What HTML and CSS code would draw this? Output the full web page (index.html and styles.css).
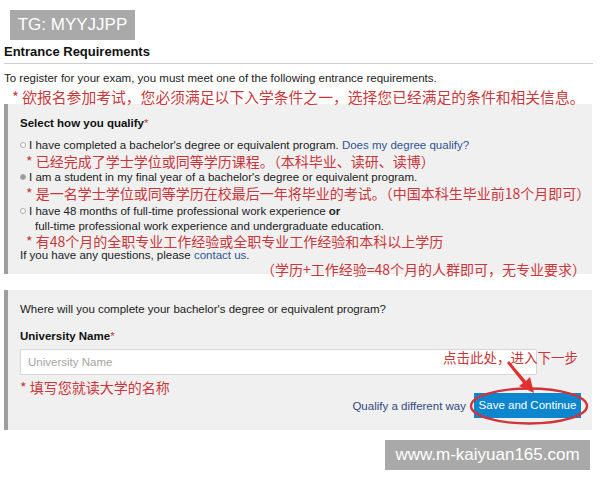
FILE: index.html
```html
<!DOCTYPE html>
<html>
<head>
<meta charset="utf-8">
<link rel="stylesheet" href="styles.css">
</head>
<body>
<div class="page">
  <div class="badge">TG: MYYJJPP</div>
  <h1 class="title">Entrance Requirements</h1>
  <p class="intro">To register for your exam, you must meet one of the following entrance requirements.</p>
  <p class="cn cn-intro">* 欲报名参加考试，您必须满足以下入学条件之一，选择您已经满足的条件和相关信息。</p>

  <div class="box box-qualify">
    <div class="row label">Select how you qualify<span class="star">*</span></div>
    <div class="row opt opt-first"><span class="radio"></span><span>I have completed a bachelor's degree or equivalent program. <a class="link">Does my degree qualify?</a></span></div>
    <div class="row cn cn-note">* 已经完成了学士学位或同等学历课程。（本科毕业、读研、读博）</div>
    <div class="row opt"><span class="radio radio-on"></span><span>I am a student in my final year of a bachelor's degree or equivalent program.</span></div>
    <div class="row cn cn-note">* 是一名学士学位或同等学历在校最后一年将毕业的考试。（中国本科生毕业前18个月即可）</div>
    <div class="row opt opt-third"><span class="radio"></span><span>I have 48 months of full-time professional work experience <b>or</b></span></div>
    <div class="row opt-cont">full-time professional work experience and undergraduate education.</div>
    <div class="row cn cn-note cn-tight">* 有48个月的全职专业工作经验或全职专业工作经验和本科以上学历</div>
    <div class="row questions">If you have any questions, please <a class="link">contact us</a>.</div>
    <div class="row cn cn-right">（学历+工作经验=48个月的人群即可，无专业要求）</div>
  </div>

  <div class="box box-uni">
    <div class="row where">Where will you complete your bachelor's degree or equivalent program?</div>
    <div class="row label uni-label">University Name<span class="star">*</span></div>
    <div class="input">University Name</div>
    <div class="row cn cn-uni">* 填写您就读大学的名称</div>
    <div class="actions">
      <a class="link qualify">Qualify a different way</a>
      <span class="button">Save and Continue</span>
    </div>
  </div>

  <div class="watermark">www.m-kaiyuan165.com</div>

  <div class="annot">点击此处，进入下一步</div>
  <svg class="overlay" width="600" height="480" viewBox="0 0 600 480">
    <ellipse cx="529" cy="406" rx="58" ry="17.5" fill="none" stroke="#d0343a" stroke-width="2.4"/>
    <path d="M507 363 L509 361 L526 381 L530 377 L534 393 L519 386 L523 383 Z" fill="#e0302f"/>
  </svg>
</div>
</body>
</html>
```
FILE: styles.css
```css
html, body {
  margin: 0;
  padding: 0;
  background: #ffffff;
}
.page {
  position: relative;
  width: 600px;
  height: 480px;
  overflow: hidden;
  font-family: "Liberation Sans", Arial, sans-serif;
  font-size: 11.5px;
  color: #222;
}
.badge {
  margin: 10px 0 0 10px;
  width: 125px;
  height: 30px;
  background: #a9a9a9;
  color: #fff;
  font-size: 17px;
  line-height: 30px;
  text-align: center;
}
.title {
  margin: 3px 0 0 4px;
  width: 589px;
  font-size: 13px;
  font-weight: bold;
  line-height: 17px;
  padding-bottom: 3px;
  border-bottom: 1px solid #cfcfcf;
  color: #111;
}
.intro {
  margin: 6px 0 0 4px;
  line-height: 16px;
}
.cn {
  font-family: "Noto Sans CJK SC", "Liberation Sans", sans-serif;
  color: #c9373c;
}
.cn-intro {
  margin: 1px 0 0 12px;
  font-size: 14.8px;
  line-height: 20px;
  white-space: nowrap;
}
.box {
  margin-left: 4px;
  width: 584px;
  background: #f0f0f0;
  border-left: 4px solid #9e9e9e;
}
.box-qualify {
  margin-top: -3px;
  padding: 11px 0 0 12px;
  width: 572px;
  height: 159px;
}
.row {
  line-height: 16px;
  white-space: nowrap;
}
.label {
  font-weight: bold;
  color: #111;
}
.star {
  color: #c9373c;
  font-weight: normal;
}
.opt {
  display: flex;
  align-items: center;
}
.opt-first {
  margin-top: 6px;
}
.opt-third {
  margin-top: 2px;
}
.radio {
  width: 4px;
  height: 4px;
  border: 1px solid #aaa;
  border-radius: 50%;
  background: #fff;
  margin-right: 3px;
  flex: none;
}
.radio-on {
  background: #999;
}
.link {
  color: #2f5590;
  text-decoration: none;
}
.opt-cont {
  padding-left: 15px;
  line-height: 15px;
}
.cn-note {
  font-size: 14px;
  line-height: 16px;
  padding-left: 6px;
}
.cn-tight {
  line-height: 15px;
}
.questions {
  line-height: 13px;
}
.cn-right {
  font-size: 14px;
  line-height: 14px;
  text-align: right;
  padding-right: 6px;
}
.box-uni {
  margin-top: 16px;
  padding: 11px 11px 12px 12px;
  width: 561px;
}
.uni-label {
  margin-top: 11px;
}
.input {
  margin-top: 5px;
  width: 508px;
  height: 24px;
  border: 1px solid #d6d6d6;
  border-radius: 2px;
  background: #fff;
  color: #a6a6a6;
  line-height: 24px;
  padding-left: 7px;
}
.cn-uni {
  margin-top: 4px;
  font-size: 14px;
}
.actions {
  margin-top: -2px;
  display: flex;
  justify-content: flex-end;
  align-items: center;
  gap: 8px;
}
.qualify {
  color: #2f4a80;
}
.button {
  background: #0c86cf;
  color: #fff;
  height: 25px;
  line-height: 25px;
  width: 107px;
  text-align: center;
  white-space: nowrap;
}
.watermark {
  margin: 10px 10px 0 auto;
  width: 205px;
  height: 30px;
  background: #a9a9a9;
  color: #fff;
  font-size: 17px;
  line-height: 30px;
  text-align: center;
}
.annot {
  position: absolute;
  left: 443px;
  top: 348px;
  font-family: "Noto Sans CJK SC", sans-serif;
  font-size: 13.5px;
  line-height: 18px;
  color: #c9373c;
  white-space: nowrap;
}
.overlay {
  position: absolute;
  left: 0;
  top: 0;
  pointer-events: none;
}
```
